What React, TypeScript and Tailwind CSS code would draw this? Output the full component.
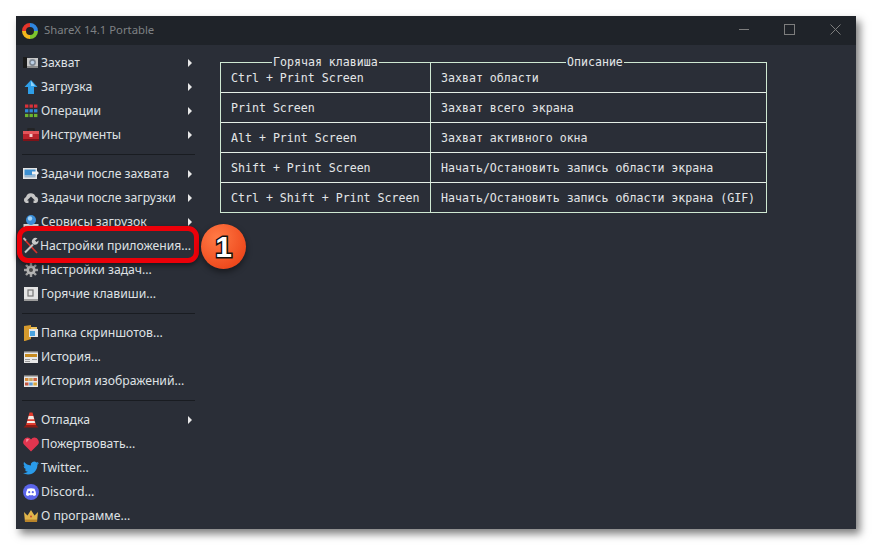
import React from "react";

const CameraIcon = () => (
  <svg width="16" height="16" viewBox="0 0 16 16">
    <rect x="0" y="3" width="15" height="10" fill="#c9c9c9" />
    <rect x="0" y="2" width="4" height="11" fill="#1b1b1b" />
    <rect x="4" y="11" width="11" height="2" fill="#8c8c8c" />
    <circle cx="9.5" cy="7.5" r="3.4" fill="#7d8793" />
    <circle cx="9.5" cy="7.5" r="1.8" fill="#bcd0e6" />
  </svg>
);
const UploadIcon = () => (
  <svg width="16" height="16" viewBox="0 0 16 16">
    <path d="M8 1 L14.5 8 H11 V15 H5 V8 H1.5 Z" fill="#2f9fe8" />
    <path d="M8 2 L12 7 H8 Z" fill="#8ed4fb" />
  </svg>
);
const OpsIcon = () => {
  const rows = ["#d8313a", "#2f86d6", "#6cb52f"];
  return (
    <svg width="16" height="16" viewBox="0 0 16 16">
      {rows.map((c, r) =>
        [2, 6.5, 11].map((x) => <rect key={`${r}-${x}`} x={x} y={1.5 + r * 4.7} width="3.4" height="3.2" fill={c} />)
      )}
    </svg>
  );
};
const ToolboxIcon = () => (
  <svg width="16" height="16" viewBox="0 0 16 16">
    <path d="M5 4 V2 H11 V4" fill="none" stroke="#222" strokeWidth="1.4" />
    <rect x="0" y="4" width="16" height="10" fill="#b8232c" />
    <rect x="0" y="4" width="16" height="3" fill="#e2545a" />
    <rect x="0" y="12" width="16" height="2" fill="#7d1319" />
    <rect x="6.5" y="7" width="3" height="3" fill="#f3c9c9" />
  </svg>
);
const AfterCaptureIcon = () => (
  <svg width="16" height="16" viewBox="0 0 16 16">
    <rect x="0" y="2" width="14" height="11" fill="#e6e6e6" />
    <rect x="1.5" y="3.5" width="11" height="6" fill="#3d8fd0" />
    <rect x="1.5" y="9.5" width="11" height="2" fill="#9bb7cf" />
    <path d="M9 5.5 H13 V4 L16 7 L13 10 V8.5 H9 Z" fill="#f2f2f2" />
  </svg>
);
const CloudIcon = () => (
  <svg width="16" height="16" viewBox="0 0 16 16">
    <path d="M3 13 A3.2 3.2 0 0 1 3 7 A5 5 0 0 1 12.5 6.5 A3.4 3.4 0 0 1 13 13 H10.5 V10.5 H12 L8 6.5 L4 10.5 H5.5 V13 Z" fill="#c6c6c6" />
  </svg>
);
const ServicesIcon = () => (
  <svg width="16" height="16" viewBox="0 0 16 16">
    <rect x="0.5" y="10" width="15" height="5" fill="#d8d8d8" />
    <rect x="2" y="12" width="8" height="1" fill="#777" />
    <circle cx="8" cy="6" r="5" fill="#3b8ed8" />
    <circle cx="7" cy="4.5" r="2.2" fill="#a5d6f7" />
  </svg>
);
const WrenchIcon = () => (
  <svg width="18" height="18" viewBox="0 0 18 18">
    <path d="M2 2 L15 16" stroke="#d5322c" strokeWidth="1.8" />
    <path d="M1.5 1 L4 3.5" stroke="#bbb" strokeWidth="1.8" />
    <path d="M3 15.5 L11 7.5" stroke="#c4c4c4" strokeWidth="2" />
    <path d="M15.5 1.5 A3.6 3.6 0 0 0 10.5 6.5 L11.5 7.5 A3.6 3.6 0 0 0 16.5 3.5 L14.5 5 L13 3.5 Z" fill="#c9c9c9" />
  </svg>
);
const GearIcon = () => (
  <svg width="16" height="16" viewBox="0 0 16 16">
    <g stroke="#a3a3a3" strokeWidth="2.4">
      <path d="M8 1 V15" />
      <path d="M1 8 H15" />
      <path d="M3 3 L13 13" />
      <path d="M13 3 L3 13" />
    </g>
    <circle cx="8" cy="8" r="4.6" fill="#b4b4b4" />
    <circle cx="8" cy="8" r="2" fill="#4b4b4b" />
  </svg>
);
const HotkeyIcon = () => (
  <svg width="16" height="16" viewBox="0 0 16 16">
    <rect x="1" y="1" width="14" height="14" fill="#e4e4e4" />
    <rect x="1" y="13" width="14" height="2" fill="#9c9c9c" />
    <rect x="5" y="4" width="5" height="6" fill="none" stroke="#777" strokeWidth="1.2" />
  </svg>
);
const FolderIcon = () => (
  <svg width="16" height="16" viewBox="0 0 16 16">
    <path d="M1 1 L8 0 V14 L2 16 H1 Z" fill="#d69a2d" />
    <rect x="8" y="2" width="6" height="10" fill="#f0c45c" />
    <rect x="6" y="4" width="9" height="8" fill="#e8e8e8" />
    <rect x="7" y="6" width="5" height="5" fill="#4aa3df" />
  </svg>
);
const HistoryIcon = () => (
  <svg width="16" height="16" viewBox="0 0 16 16">
    <rect x="1" y="2" width="14" height="12" fill="#e8e8e8" />
    <rect x="1" y="2" width="14" height="1.5" fill="#777" />
    <rect x="2" y="5" width="12" height="3" fill="#c68a1e" />
    <rect x="2" y="10" width="5" height="1" fill="#9a9a9a" />
    <rect x="9" y="10" width="5" height="1" fill="#9a9a9a" />
    <rect x="2" y="12" width="5" height="1" fill="#9a9a9a" />
  </svg>
);
const ImageHistoryIcon = () => (
  <svg width="16" height="16" viewBox="0 0 16 16">
    <rect x="1" y="2" width="14" height="12" fill="#e8e8e8" />
    <rect x="1" y="2" width="14" height="1.5" fill="#777" />
    <rect x="2" y="5" width="3.5" height="3" fill="#d98d3a" />
    <rect x="6.2" y="5" width="3.5" height="3" fill="#c9a55a" />
    <rect x="10.4" y="5" width="3.5" height="3" fill="#d0603f" />
    <rect x="2" y="9.5" width="3.5" height="3" fill="#c2553f" />
    <rect x="6.2" y="9.5" width="3.5" height="3" fill="#5f9ad0" />
    <rect x="10.4" y="9.5" width="3.5" height="3" fill="#d9a53a" />
  </svg>
);
const ConeIcon = () => (
  <svg width="16" height="16" viewBox="0 0 16 16">
    <path d="M6.5 0.5 H9.5 L13 13 H3 Z" fill="#e03c2e" />
    <path d="M5.7 4 H10.3 L11.2 7.2 H4.8 Z" fill="#f1ece6" />
    <path d="M4.4 9 H11.6 L12.2 11 H3.8 Z" fill="#f1ece6" />
    <path d="M0.5 15.5 L3 13 H13 L15.5 15.5 Z" fill="#8f1a14" />
  </svg>
);
const HeartIcon = () => (
  <svg width="16" height="16" viewBox="0 0 16 16">
    <path d="M8 15.5 L1.5 9 A4 4 0 0 1 0.8 4 A4 4 0 0 1 8 3.5 A4 4 0 0 1 15.2 4 A4 4 0 0 1 14.5 9 Z" fill="#e2354f" />
    <path d="M3 3.5 A2 2 0 0 1 6 3.5 L3.5 6.5 Z" fill="#f58a99" />
  </svg>
);
const TwitterIcon = () => (
  <svg width="16" height="16" viewBox="0 0 24 24">
    <path
      d="M23.95 4.57a10 10 0 0 1-2.82.77 4.96 4.96 0 0 0 2.16-2.72c-.95.55-2 .96-3.12 1.19a4.92 4.92 0 0 0-8.38 4.48C7.69 8.1 4.07 6.13 1.64 3.16a4.82 4.82 0 0 0-.66 2.47c0 1.71.87 3.21 2.19 4.1a4.9 4.9 0 0 1-2.23-.62v.06a4.92 4.92 0 0 0 3.95 4.83 5 5 0 0 1-2.21.08 4.94 4.94 0 0 0 4.6 3.42A9.87 9.87 0 0 1 0 19.54a14 14 0 0 0 7.56 2.21c9.05 0 14-7.5 14-13.98 0-.21 0-.42-.02-.63a9.94 9.94 0 0 0 2.41-2.57z"
      fill="#2a9bea"
    />
  </svg>
);
const DiscordIcon = () => (
  <svg width="16" height="16" viewBox="0 0 16 16">
    <circle cx="8" cy="8" r="8" fill="#5b65ea" />
    <path d="M4.5 4.8 Q8 3.6 11.5 4.8 Q13 7.5 13 11 Q11.8 11.9 10.6 12 L10 11 Q8 11.5 6 11 L5.4 12 Q4.2 11.9 3 11 Q3 7.5 4.5 4.8 Z" fill="#fff" />
    <circle cx="6.2" cy="8.2" r="1.1" fill="#5b65ea" />
    <circle cx="9.8" cy="8.2" r="1.1" fill="#5b65ea" />
  </svg>
);
const CrownIcon = () => (
  <svg width="16" height="16" viewBox="0 0 16 16">
    <path d="M1 4 L4.5 7.5 L8 2 L11.5 7.5 L15 4 L14 14 H2 Z" fill="#e0b44a" />
    <rect x="2" y="11.5" width="12" height="2.5" fill="#b9842a" />
    <circle cx="8" cy="8.5" r="1" fill="#c9482f" />
  </svg>
);
const ShareXLogo = () => (
  <svg width="16" height="16" viewBox="0 0 16 16" fill="none" strokeWidth="4">
    <path d="M8 2 A6 6 0 0 1 14 8" stroke="#2f86e0" />
    <path d="M14 8 A6 6 0 0 1 8 14" stroke="#7cc52d" />
    <path d="M8 14 A6 6 0 0 1 2 8" stroke="#f6b81c" />
    <path d="M2 8 A6 6 0 0 1 8 2" stroke="#e5352b" />
  </svg>
);

type Item = { label: string; icon: React.ReactNode; arrow?: boolean; tight?: boolean };

const groups: Item[][] = [
  [
    { label: "Захват", icon: <CameraIcon />, arrow: true },
    { label: "Загрузка", icon: <UploadIcon />, arrow: true },
    { label: "Операции", icon: <OpsIcon />, arrow: true },
    { label: "Инструменты", icon: <ToolboxIcon />, arrow: true },
  ],
  [
    { label: "Задачи после захвата", icon: <AfterCaptureIcon />, arrow: true },
    { label: "Задачи после загрузки", icon: <CloudIcon />, arrow: true },
    { label: "Сервисы загрузок", icon: <ServicesIcon />, arrow: true },
    { label: "Настройки приложения...", icon: <WrenchIcon />, tight: true },
    { label: "Настройки задач...", icon: <GearIcon /> },
    { label: "Горячие клавиши...", icon: <HotkeyIcon /> },
  ],
  [
    { label: "Папка скриншотов...", icon: <FolderIcon /> },
    { label: "История...", icon: <HistoryIcon /> },
    { label: "История изображений...", icon: <ImageHistoryIcon /> },
  ],
  [
    { label: "Отладка", icon: <ConeIcon />, arrow: true },
    { label: "Пожертвовать...", icon: <HeartIcon /> },
    { label: "Twitter...", icon: <TwitterIcon /> },
    { label: "Discord...", icon: <DiscordIcon /> },
    { label: "О программе...", icon: <CrownIcon /> },
  ],
];

const hotkeys = [
  ["Ctrl + Print Screen", "Захват области"],
  ["Print Screen", "Захват всего экрана"],
  ["Alt + Print Screen", "Захват активного окна"],
  ["Shift + Print Screen", "Начать/Остановить запись области экрана"],
  ["Ctrl + Shift + Print Screen", "Начать/Остановить запись области экрана (GIF)"],
];

const MenuRow = ({ item }: { item: Item }) => (
  <div className="flex h-6 items-center">
    <div className="flex w-[18px] shrink-0 items-center justify-center">{item.icon}</div>
    <span className={`flex-1 whitespace-nowrap text-[12.2px] text-[#dfe1e4] ${item.tight ? "" : "ml-px"}`}>{item.label}</span>
    {item.arrow && <div className="mr-[3px] h-0 w-0 border-y-[4px] border-l-[4px] border-y-transparent border-l-[#e8e8e8]" />}
  </div>
);

export default function App() {
  return (
    <div className="h-[545px] w-[872px] overflow-hidden bg-white p-4 font-['Noto_Sans',sans-serif]">
      <div className="relative flex h-[513px] w-[840px] flex-col bg-[#2a2e37] shadow-[4px_5px_8px_rgba(0,0,0,0.5)]">
        <div className="flex h-[29px] shrink-0 items-center bg-[#1f2329] pl-[6px]">
          <ShareXLogo />
          <span className="ml-[6px] text-[11.3px] text-[#7e8184]">ShareX 14.1 Portable</span>
          <div className="mb-[2px] ml-auto flex items-center">
            <div className="h-px w-[10px] bg-[#7d7d7d]" />
            <div className="ml-[35px] h-[11px] w-[11px] border border-[#7d7d7d]" />
            <svg className="ml-[35px] mr-[15px]" width="11" height="11" viewBox="0 0 11 11">
              <path d="M0.5 0.5 L10.5 10.5 M10.5 0.5 L0.5 10.5" stroke="#7d7d7d" strokeWidth="1" />
            </svg>
          </div>
        </div>
        <div className="flex flex-1 pt-[5px]">
          <div className="ml-[6px] w-[173px] shrink-0 pt-px">
            {groups.map((group, i) => (
              <div key={i}>
                {i > 0 && <div className="my-[7px] h-px bg-[#191c21]" />}
                {group.map((item) => (
                  <MenuRow key={item.label} item={item} />
                ))}
              </div>
            ))}
          </div>
          <div className="relative ml-[25px] mt-3 h-[151px] w-[547px] border border-[#cfe8d2] font-['DejaVu_Sans_Mono',monospace] text-[11.6px] text-[#e4e6e8]">
            {hotkeys.map(([keys, desc], i) => (
              <div key={keys} className={`flex items-stretch ${i > 0 ? "h-[30px] border-t border-[#e4eee6]" : "h-[29px]"}`}>
                <div className="flex w-[209px] items-center whitespace-nowrap pl-[10px] pt-[3px]">{keys}</div>
                <div className="flex flex-1 items-center whitespace-nowrap border-l border-[#cfe8d2] pl-[10px] pt-[3px]">{desc}</div>
              </div>
            ))}
            <span className="absolute -top-[9px] left-[51px] bg-[#2a2e37] px-px leading-4">Горячая клавиша</span>
            <span className="absolute -top-[9px] left-[345px] bg-[#2a2e37] px-px leading-4">Описание</span>
          </div>
        </div>
        <div className="absolute left-px top-[210px] h-[37px] w-[182px] rounded-[11px] border-[5px] border-[#ec0009] shadow-[0_2px_5px_rgba(0,0,0,0.5)]" />
        <div className="absolute left-[185px] top-[208px] flex h-[45px] w-[45px] items-center justify-center rounded-full bg-[radial-gradient(circle_at_35%_30%,#ff7a45,#e8380f)] font-['Liberation_Sans',sans-serif] text-[30px] font-bold text-white shadow-[0_3px_6px_rgba(0,0,0,0.45)] [-webkit-text-stroke:3px_#111] [paint-order:stroke_fill]">
          1
        </div>
      </div>
    </div>
  );
}
